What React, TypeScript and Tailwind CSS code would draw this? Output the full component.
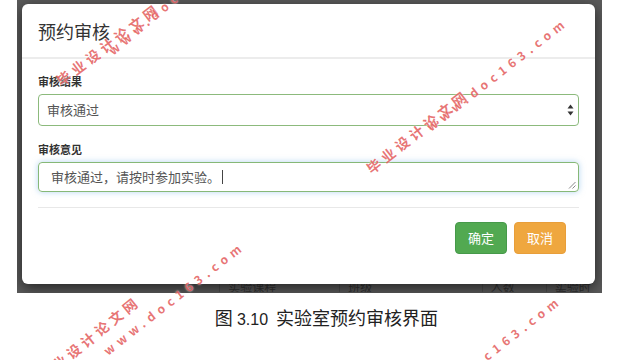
import React from 'react';

const cjk = "font-['Noto_Sans_CJK_SC',sans-serif]";

function SelectArrows() {
  return (
    <svg width="7" height="12" viewBox="0 0 7 12" className="text-[#333]">
      <path d="M3.5 0.5 L6.5 4.5 H0.5 Z" fill="currentColor" />
      <path d="M3.5 11.5 L6.5 7.5 H0.5 Z" fill="currentColor" />
    </svg>
  );
}

function Grip() {
  return (
    <svg width="8" height="8" viewBox="0 0 8 8" className="absolute right-[2px] bottom-[2px] text-[#888]">
      <path d="M7.5 1 L1 7.5 M7.5 4.5 L4.5 7.5" stroke="currentColor" strokeWidth="1" fill="none" />
    </svg>
  );
}

// site watermark stamped over the screenshot
function Watermarks() {
  const cn = "absolute origin-left whitespace-nowrap leading-[20px] font-bold text-[#e04848]/75 [text-shadow:0_0_2px_rgba(255,255,255,0.9)] " + cjk;
  return (
    <div className="absolute inset-0 pointer-events-none z-20">
      <span className={cn + ' left-[58px] top-[72px] rotate-[-37deg] text-[14px] tracking-[4px]'}>毕业设计论文网</span>
      <span className={cn + ' left-[110px] top-[42px] rotate-[-40deg] text-[12px] tracking-[5px]'}>www.doc163.com</span>
      <span className={cn + ' left-[368px] top-[160px] rotate-[-38deg] text-[14px] tracking-[4px]'}>毕业设计论文网</span>
      <span className={cn + ' left-[428px] top-[118px] rotate-[-38deg] text-[12px] tracking-[5px]'}>www.doc163.com</span>
      <span className={cn + ' left-[40px] top-[368px] rotate-[-39deg] text-[14px] tracking-[4px]'}>毕业设计论文网</span>
      <span className={cn + ' left-[105px] top-[342px] rotate-[-38deg] text-[12px] tracking-[5px]'}>www.doc163.com</span>
      <span className={cn + ' left-[422px] top-[396px] rotate-[-38deg] text-[12px] tracking-[5px]'}>www.doc163.com</span>
    </div>
  );
}

export default function App() {
  return (
    <div className={'relative w-[628px] h-[360px] overflow-hidden bg-white ' + cjk}>
      {/* screenshot of the page with the modal open */}
      <div className="ml-[17px] w-[585px] h-[293px] bg-[#5a5a5a] pt-[4px] pl-[5px] flex flex-col overflow-hidden">
        <div className="relative z-10 w-[573px] h-[280px] bg-white rounded-[6px] shadow-[0_4px_14px_rgba(0,0,0,0.6)] flex flex-col">
          <div className="h-[55px] px-4 flex items-center border-b-2 border-[#ececec]">
            <h4 className="text-[18px] leading-6 text-[#333]">预约审核</h4>
          </div>
          <div className="px-4 pt-[14px]">
            <label className="block text-[11px] font-bold leading-[17px] text-[#333] mb-1">审核结果</label>
            <div className="h-[32px] border border-[#8cba7c] rounded-[4px] flex items-center justify-between pl-2 pr-[4px]">
              <span className="text-[13px] text-[#555]">审核通过</span>
              <SelectArrows />
            </div>
            <label className="block mt-[15px] text-[11px] font-bold leading-[17px] text-[#333] mb-1">审核意见</label>
            <div className="relative h-[30px] border border-[#86b877] rounded-[4px] shadow-[0_0_6px_rgba(120,180,230,0.55)] flex items-center pl-3">
              <span className="text-[13px] text-[#555]">审核通过，请按时参加实验。</span>
              <span className="ml-[2px] w-px h-[14px] bg-[#444]" />
              <Grip />
            </div>
            <div className="mt-[15px] border-t border-[#e8e8e8]" />
            <div className="flex justify-end gap-[7px] pr-[13px] mt-[14px]">
              <button className="w-[52px] h-[32px] rounded-[4px] bg-[#52a951] border border-[#46994a] text-white text-[13px]">确定</button>
              <button className="w-[52px] h-[32px] rounded-[4px] bg-[#efa73f] border border-[#e89e3a] text-white text-[13px]">取消</button>
            </div>
          </div>
        </div>
        {/* table header of the page behind, mostly hidden */}
        <div className="flex h-[10px] -mt-[2px] text-[12px] leading-[9px] text-[#333] overflow-hidden">
          <div className="w-[202px] border-r border-[#4c4c4c]" />
          <div className="w-[122px] pl-[8px] border-r border-[#4c4c4c]">实验课程</div>
          <div className="w-[145px] pl-[8px] border-r border-[#4c4c4c]">班级</div>
          <div className="w-[65px] pl-[8px] border-r border-[#4c4c4c]">人数</div>
          <div className="pl-[8px]">实验时间</div>
        </div>
      </div>
      <div className="mt-[12px] pl-[25px] text-center text-[18px] leading-6 text-[#222]">
        图 <span className="font-['Liberation_Sans',sans-serif] text-[16px]">3.10</span>&nbsp; 实验室预约审核界面
      </div>
      <Watermarks />
    </div>
  );
}
